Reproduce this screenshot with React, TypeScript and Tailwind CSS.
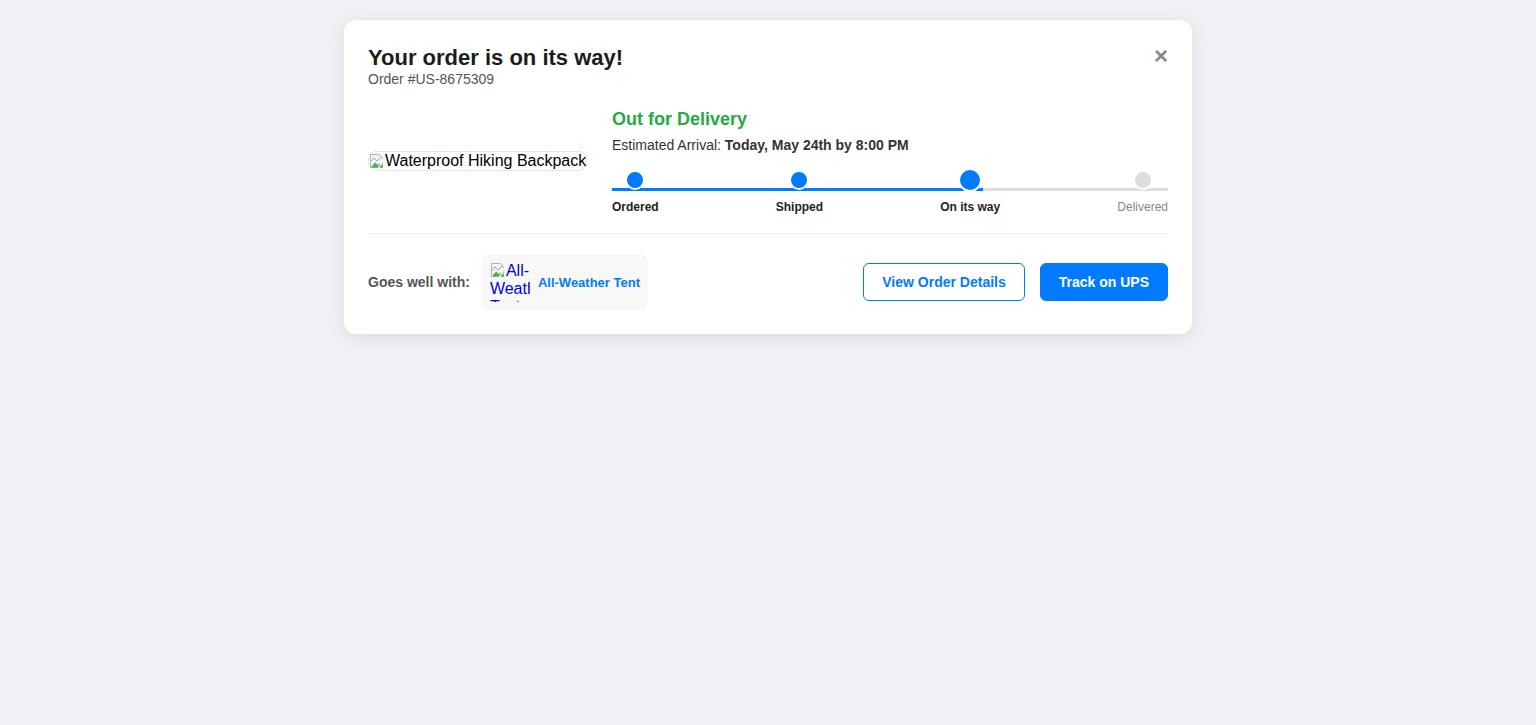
import React from "react";

function BrokenIcon() {
  return (
    <svg width="16" height="16" viewBox="0 0 16 16" className="inline-block shrink-0 align-[-2px]">
      <path d="M1.5 1.5h9l3 3v10h-12z" fill="#f4f4f4" stroke="#b5b5b5" />
      <path d="M2 14.5 L6 9.5 L9 12 L11 10 L14 13.5 V14.5 Z" fill="#4caf50" />
      <path d="M2 8 L5 5 L8 8 L13 3" fill="none" stroke="#7fb3e0" strokeWidth="1" />
      <path d="M9.5 15 L14.5 6" stroke="#ffffff" strokeWidth="1.5" />
    </svg>
  );
}

function Step({ label, state }: { label: string; state: "done" | "active" | "todo" }) {
  return (
    <div className="relative z-10 flex flex-col items-center">
      <div className="flex h-5 items-center justify-center">
        {state === "active" ? (
          <div className="h-6 w-6 shrink-0 rounded-full border-2 border-white bg-[#007bff]" />
        ) : (
          <div
            className={
              "h-5 w-5 shrink-0 rounded-full border-2 border-white " +
              (state === "done" ? "bg-[#007bff]" : "bg-[#dddddd]")
            }
          />
        )}
      </div>
      <div
        className={
          "mt-[10px] text-[12px] " +
          (state === "todo" ? "font-normal text-[#888]" : "font-bold text-[#222]")
        }
      >
        {label}
      </div>
    </div>
  );
}

export default function App() {
  return (
    <div
      className="min-h-[725px] bg-[#f0f2f5] px-5 pt-5 leading-[normal]"
      style={{ fontFamily: '"Liberation Sans", Arial, Helvetica, sans-serif' }}
    >
      <div className="relative mx-auto w-[848px] rounded-xl bg-white px-6 pb-6 pt-[25px] leading-[normal] shadow-[0_4px_20px_rgba(0,0,0,0.1)]">
        <button className="absolute right-6 top-6 text-[24px] font-bold leading-none text-[#888]">
          ×
        </button>

        <div>
          <h2 className="text-[22px] font-bold leading-[normal] text-[#1c1c1c]">Your order is on its way!</h2>
          <p className="text-[14px] leading-[normal] text-[#555]">Order #US-8675309</p>
        </div>

        <div className="flex items-center gap-6 border-b border-[#eeeeee] pb-[19px] pt-[22px]">
          <div className="w-[220px] shrink-0">
            <span className="inline-flex items-center rounded-lg border border-[#e6e6e6] text-[16px] leading-[18px] text-black">
              <BrokenIcon />
              Waterproof Hiking Backpack
            </span>
          </div>
          <div className="flex-1">
            <div className="text-[18px] font-bold leading-[normal] text-[#28a745]">Out for Delivery</div>
            <div className="mt-[7px] text-[14px] leading-[normal] text-[#333]">
              Estimated Arrival: <span className="font-bold">Today, May 24th by 8:00 PM</span>
            </div>
            <div className="relative mt-[17px]">
              <div className="absolute left-0 right-0 top-[18px] h-[3px] bg-[#dddddd]">
                <div className="h-full w-[66.67%] bg-[#007bff]" />
              </div>
              <div className="flex justify-between">
                <Step label="Ordered" state="done" />
                <Step label="Shipped" state="done" />
                <Step label="On its way" state="active" />
                <Step label="Delivered" state="todo" />
              </div>
            </div>
          </div>
        </div>

        <div className="flex items-center justify-between pt-5">
          <div className="flex items-center gap-3">
            <span className="text-[14px] font-bold text-[#555]">Goes well with:</span>
            <div className="flex items-center gap-2 rounded-lg bg-[#f8f8f8] p-2">
              <div className="h-10 w-10 shrink-0 overflow-hidden text-[16px] leading-[normal] text-[#0000ee]">
                <BrokenIcon />
                All-Weather Tent
              </div>
              <span className="text-[13px] font-bold text-[#007bff]">All-Weather Tent</span>
            </div>
          </div>
          <div className="flex items-center gap-[15px]">
            <button className="rounded-md border border-[#007bff] bg-white px-[18px] py-2.5 text-[14px] font-bold leading-[normal] text-[#007bff]">
              View Order Details
            </button>
            <button className="rounded-md border border-[#007bff] bg-[#007bff] px-[18px] py-2.5 text-[14px] font-bold leading-[normal] text-white">
              Track on UPS
            </button>
          </div>
        </div>
      </div>
    </div>
  );
}
